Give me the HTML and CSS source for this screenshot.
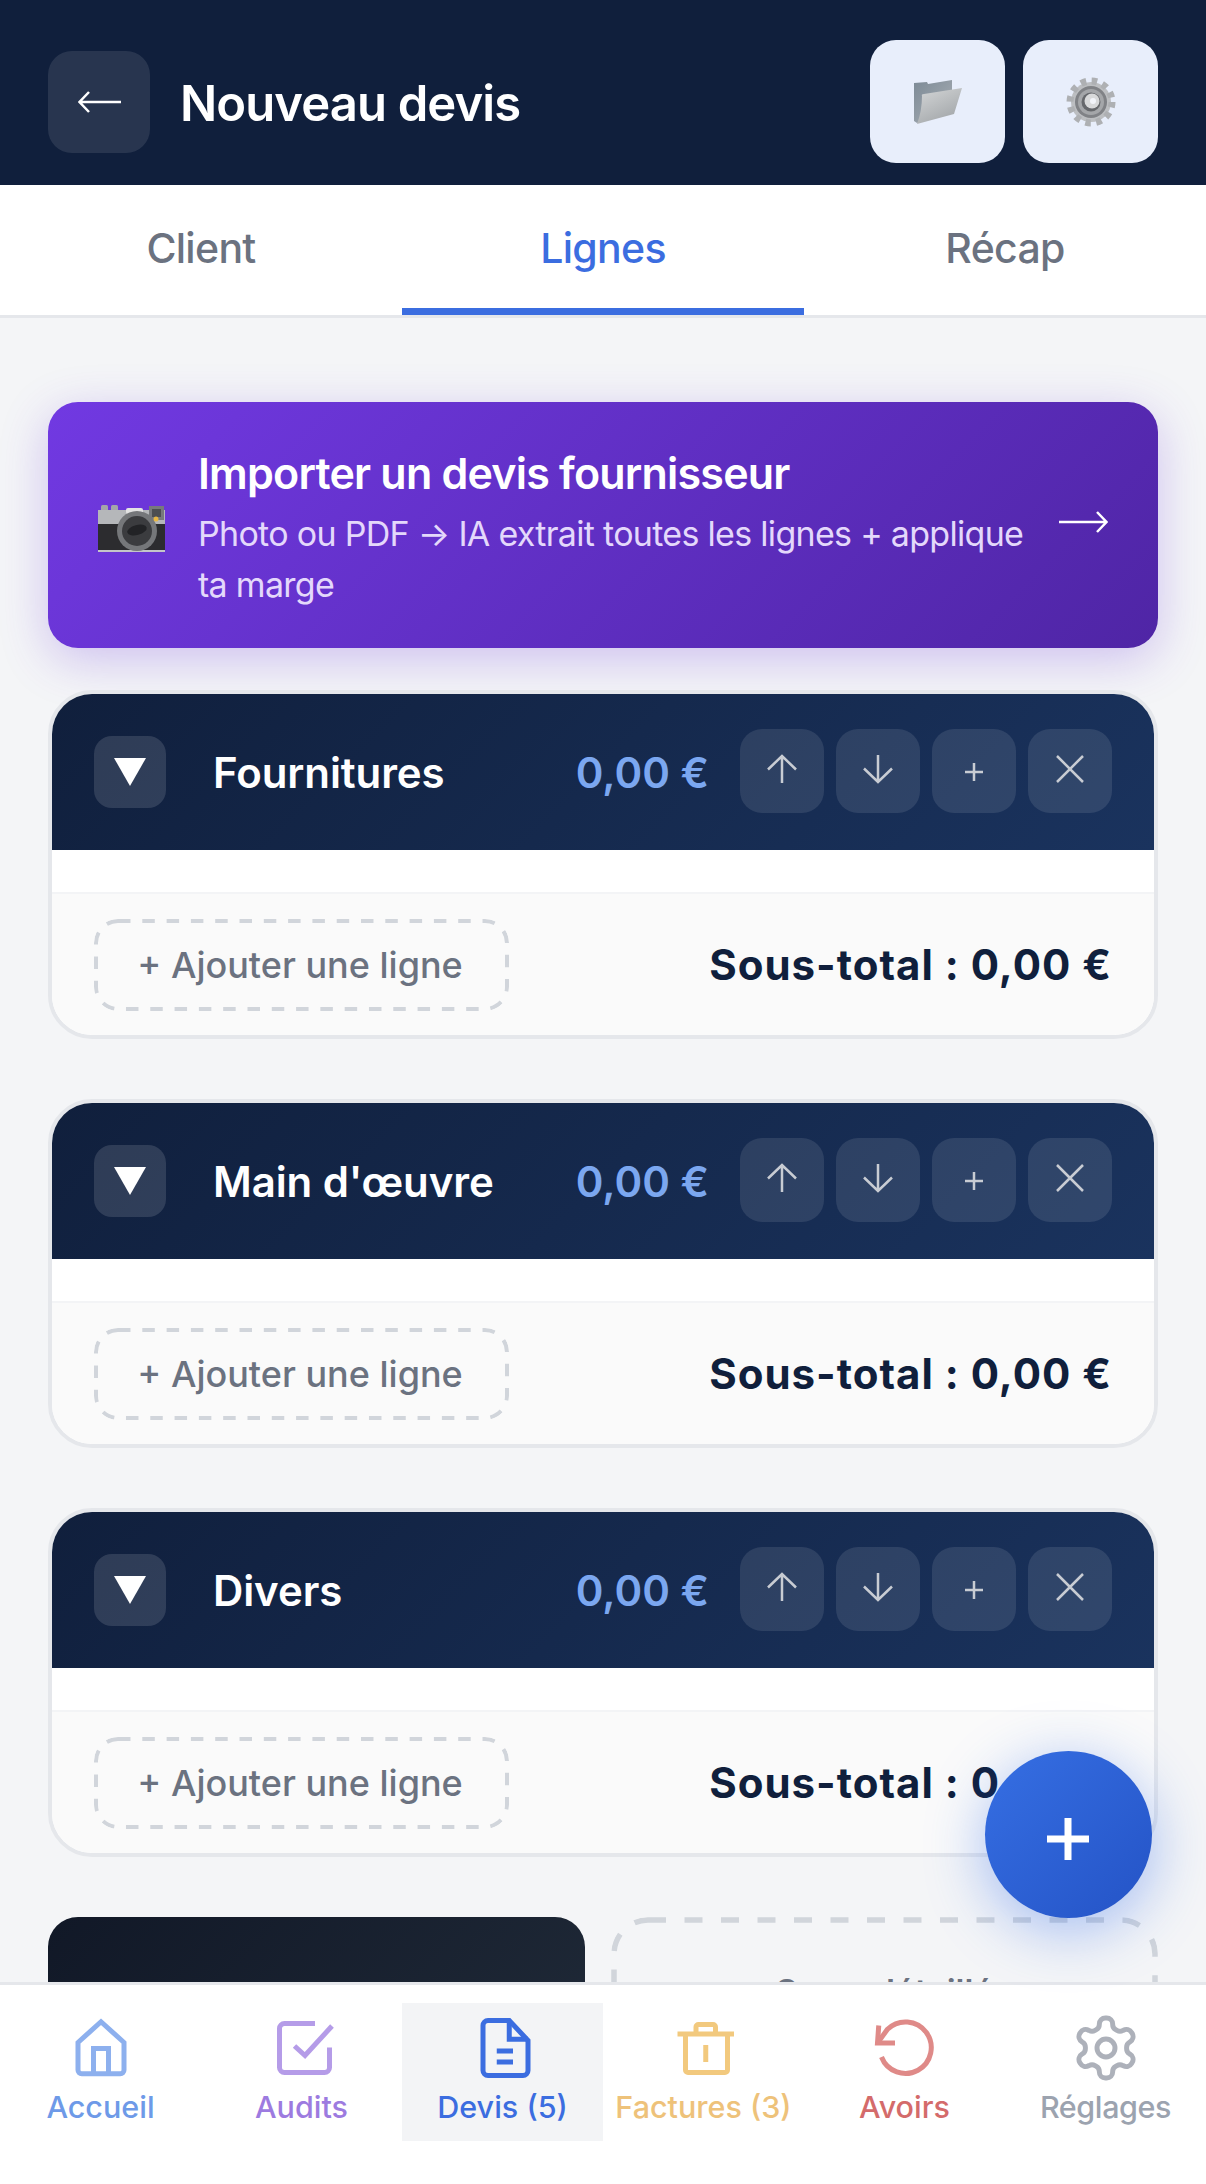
FILE: index.html
```html
<!DOCTYPE html>
<html lang="fr">
<head>
<meta charset="utf-8">
<title>Nouveau devis</title>
<link rel="stylesheet" href="styles.css">
</head>
<body>
<div class="app">
  <header class="topbar">
    <button class="back-btn">
      <svg width="43" height="22" viewBox="0 0 43 22" class="line-icon"><path d="M43 11H2M11 1 1.500 11l9.500 10"/></svg>
    </button>
    <h1 class="page-title">Nouveau devis</h1>
    <div class="top-actions">
      <button class="top-btn">
        <svg width="50" height="46" viewBox="0 0 50 46">
          <defs>
            <linearGradient id="fb" x1="0" y1="0" x2="1" y2="1"><stop offset="0" stop-color="#7d8a96"/><stop offset="1" stop-color="#aab0b6"/></linearGradient>
            <linearGradient id="ff" x1="0" y1="0" x2="0.6" y2="1"><stop offset="0" stop-color="#d5d7d8"/><stop offset="1" stop-color="#a3a7aa"/></linearGradient>
          </defs>
          <path d="M1 4 14 3l1 2 24-4v30L4 44 1 42z" fill="url(#fb)"/>
          <path d="M9 17Q8 15 11 15L49 9 41 35 4 45Q9 32 9 17z" fill="url(#ff)"/>
        </svg>
      </button>
      <button class="top-btn">
        <svg width="50" height="50" viewBox="0 0 50 50">
          <circle cx="25" cy="25" r="20" fill="#bcbec1"/>
          <circle cx="25" cy="25" r="21" fill="none" stroke="#aeb0b3" stroke-width="7" stroke-dasharray="5.500 5.500"/>
          <circle cx="25" cy="25" r="16" fill="#808286"/>
          <circle cx="25" cy="25" r="13" fill="#a4a6a9"/>
          <circle cx="25" cy="25" r="9.500" fill="#66686c"/>
          <circle cx="26" cy="24" r="7.500" fill="#d8d9da"/>
          <circle cx="27" cy="24" r="3" fill="#f2f4f9"/>
        </svg>
      </button>
    </div>
  </header>

  <nav class="tabs">
    <a class="tab">Client</a>
    <a class="tab tab-active">Lignes</a>
    <a class="tab">Récap</a>
  </nav>

  <main class="content">
    <section class="import-card">
      <svg class="camera" width="67" height="47" viewBox="0 0 67 47">
        <rect x="3" y="0" width="7" height="8" rx="1.500" fill="#a4a6a9"/>
        <rect x="13" y="0" width="7" height="8" rx="1.500" fill="#a4a6a9"/>
        <rect x="0" y="5" width="67" height="15" fill="#b5b7ba"/>
        <rect x="0" y="19" width="67" height="26" fill="#2c2c2f"/>
        <rect x="0" y="45" width="67" height="2" fill="#c4c5c8"/>
        <rect x="28" y="3" width="17" height="6" rx="2" fill="#e3e3e3"/>
        <rect x="51" y="1" width="15" height="14" fill="#77797c"/>
        <rect x="54" y="4" width="9" height="8" fill="#4c4e51"/>
        <circle cx="39" cy="26" r="20" fill="#75777a"/>
        <circle cx="39" cy="26" r="15" fill="#3b3c3f"/>
        <ellipse cx="39" cy="25" rx="10" ry="5" fill="#222326" transform="rotate(-15 39 25)"/>
        <circle cx="58" cy="14" r="2.500" fill="#e7b744"/>
      </svg>
      <div class="import-text">
        <div class="import-title">Importer un devis fournisseur</div>
        <div class="import-sub">Photo ou PDF → IA extrait toutes les lignes + applique ta marge</div>
      </div>
      <svg class="import-arrow line-icon" width="49" height="22" viewBox="0 0 49 22"><path d="M0 11H47M38 1l9.500 10L38 21"/></svg>
    </section>

    <section class="group">
      <div class="group-head">
        <button class="toggle"><svg width="32" height="28" viewBox="0 0 32 28"><path d="M0 0H32L16 28z" fill="#fff"/></svg></button>
        <h2 class="group-name">Fournitures</h2>
        <span class="group-amount">0,00 €</span>
        <div class="group-actions">
          <button class="act"><svg class="act-icon" width="32" height="30" viewBox="0 0 32 30"><path d="M16 29V2M2 15.500 16 2l14 13.500"/></svg></button>
          <button class="act"><svg class="act-icon" width="32" height="30" viewBox="0 0 32 30"><path d="M16 1v27M2 14.500 16 28l14-13.500"/></svg></button>
          <button class="act"><svg class="act-icon act-plus" width="20" height="20" viewBox="0 0 20 20"><path d="M10 1v18M1 10h18"/></svg></button>
          <button class="act"><svg class="act-icon" width="30" height="30" viewBox="0 0 30 30"><path d="m2 2 26 26M28 2 2 28"/></svg></button>
        </div>
      </div>
      <div class="group-body"></div>
      <div class="group-foot">
        <button class="add-line">+ Ajouter une ligne</button>
        <strong class="subtotal">Sous-total : 0,00 €</strong>
      </div>
    </section>

    <section class="group">
      <div class="group-head">
        <button class="toggle"><svg width="32" height="28" viewBox="0 0 32 28"><path d="M0 0H32L16 28z" fill="#fff"/></svg></button>
        <h2 class="group-name">Main d'œuvre</h2>
        <span class="group-amount">0,00 €</span>
        <div class="group-actions">
          <button class="act"><svg class="act-icon" width="32" height="30" viewBox="0 0 32 30"><path d="M16 29V2M2 15.500 16 2l14 13.500"/></svg></button>
          <button class="act"><svg class="act-icon" width="32" height="30" viewBox="0 0 32 30"><path d="M16 1v27M2 14.500 16 28l14-13.500"/></svg></button>
          <button class="act"><svg class="act-icon act-plus" width="20" height="20" viewBox="0 0 20 20"><path d="M10 1v18M1 10h18"/></svg></button>
          <button class="act"><svg class="act-icon" width="30" height="30" viewBox="0 0 30 30"><path d="m2 2 26 26M28 2 2 28"/></svg></button>
        </div>
      </div>
      <div class="group-body"></div>
      <div class="group-foot">
        <button class="add-line">+ Ajouter une ligne</button>
        <strong class="subtotal">Sous-total : 0,00 €</strong>
      </div>
    </section>

    <section class="group">
      <div class="group-head">
        <button class="toggle"><svg width="32" height="28" viewBox="0 0 32 28"><path d="M0 0H32L16 28z" fill="#fff"/></svg></button>
        <h2 class="group-name">Divers</h2>
        <span class="group-amount">0,00 €</span>
        <div class="group-actions">
          <button class="act"><svg class="act-icon" width="32" height="30" viewBox="0 0 32 30"><path d="M16 29V2M2 15.500 16 2l14 13.500"/></svg></button>
          <button class="act"><svg class="act-icon" width="32" height="30" viewBox="0 0 32 30"><path d="M16 1v27M2 14.500 16 28l14-13.500"/></svg></button>
          <button class="act"><svg class="act-icon act-plus" width="20" height="20" viewBox="0 0 20 20"><path d="M10 1v18M1 10h18"/></svg></button>
          <button class="act"><svg class="act-icon" width="30" height="30" viewBox="0 0 30 30"><path d="m2 2 26 26M28 2 2 28"/></svg></button>
        </div>
      </div>
      <div class="group-body"></div>
      <div class="group-foot">
        <button class="add-line">+ Ajouter une ligne</button>
        <strong class="subtotal">Sous-total : 0,00 €</strong>
      </div>
    </section>

    <div class="bottom-actions">
      <div class="dark-card"></div>
      <div class="dashed-card">Sous-détaillé</div>
    </div>
  </main>

  <button class="fab"><svg class="fab-plus" width="42" height="42" viewBox="0 0 42 42"><path d="M21 0v42M0 21h42" stroke="#fff" stroke-width="7" fill="none"/></svg></button>

  <nav class="bottom-nav">
    <a class="nav-item nav-home">
      <svg class="nav-icon" width="60" height="60" viewBox="0 0 24 24"><path d="M2.800 9.800 12 1.500l9.200 8.300V20.800a1.500 1.500 0 0 1-1.500 1.500H4.300a1.500 1.500 0 0 1-1.500-1.500z"/><path d="M9 22.300V12.200h6v10.100"/></svg>
      <span>Accueil</span>
    </a>
    <a class="nav-item nav-audits">
      <svg class="nav-icon" width="60" height="60" viewBox="0 0 24 24"><path d="M17.200 2.200H5a2 2 0 0 0-2 2V19.800a2 2 0 0 0 2 2H21a2 2 0 0 0 2-2V11.800"/><path d="M9 11.200l4.200 3.800L24 3.200"/></svg>
      <span>Audits</span>
    </a>
    <a class="nav-item nav-devis nav-active">
      <svg class="nav-icon" width="60" height="60" viewBox="0 0 24 24"><path d="M6 1H14.500L22 9V21a2 2 0 0 1-2 2H6a2 2 0 0 1-2-2V3a2 2 0 0 1 2-2z"/><path d="M14.500 1V8.500H22"/><path d="M9.500 13.200H16M9.500 17.600H16"/></svg>
      <span>Devis (5)</span>
    </a>
    <a class="nav-item nav-factures">
      <svg class="nav-icon" width="60" height="60" viewBox="0 0 24 24"><path d="M1.400 6.400H24"/><path d="M4.600 6.400V20.800a1 1 0 0 0 1 1H20.400a1 1 0 0 0 1-1V6.400"/><path d="M8.800 6.400V3.600a1 1 0 0 1 1-1h5.800a1 1 0 0 1 1 1V6.400"/><path d="M12.700 10.800V17.600"/></svg>
      <span>Factures (3)</span>
    </a>
    <a class="nav-item nav-avoirs">
      <svg class="nav-icon" width="60" height="60" viewBox="0 0 24 24"><path d="M2.600 15.600A10.300 10.300 0 1 0 5 4.500L1 10"/><path d="M1.500 3 1 10H8"/></svg>
      <span>Avoirs</span>
    </a>
    <a class="nav-item nav-reglages">
      <svg class="nav-icon nav-gear" width="72" height="72" viewBox="0 0 24 24"><path d="M12.220 2h-.44a2 2 0 0 0-2 2v.18a2 2 0 0 1-1 1.730l-.43.250a2 2 0 0 1-2 0l-.150-.080a2 2 0 0 0-2.730.730l-.220.380a2 2 0 0 0 .730 2.730l.150.100a2 2 0 0 1 1 1.720v.510a2 2 0 0 1-1 1.740l-.150.090a2 2 0 0 0-.730 2.730l.220.380a2 2 0 0 0 2.730.730l.150-.080a2 2 0 0 1 2 0l.430.250a2 2 0 0 1 1 1.730V20a2 2 0 0 0 2 2h.440a2 2 0 0 0 2-2v-.180a2 2 0 0 1 1-1.730l.430-.250a2 2 0 0 1 2 0l.150.080a2 2 0 0 0 2.730-.730l.220-.390a2 2 0 0 0-.730-2.730l-.150-.080a2 2 0 0 1-1-1.740v-.500a2 2 0 0 1 1-1.740l.150-.090a2 2 0 0 0 .730-2.730l-.220-.380a2 2 0 0 0-2.730-.730l-.150.080a2 2 0 0 1-2 0l-.430-.250a2 2 0 0 1-1-1.730V4a2 2 0 0 0-2-2z"/><circle cx="12" cy="12" r="3"/></svg>
      <span>Réglages</span>
    </a>
  </nav>
</div>
</body>
</html>
```

FILE: styles.css
```css
* { box-sizing: border-box; }
html, body { margin: 0; padding: 0; }
body { font-family: Inter, "Liberation Sans", sans-serif; background: #f4f5f7; }
button { font-family: inherit; border: 0; padding: 0; }
h1, h2 { margin: 0; }

.app { position: relative; width: 1206px; height: 2184px; overflow: hidden; background: #f4f5f7; }

.line-icon { fill: none; stroke: #fff; stroke-width: 2.500; }

/* top bar */
.topbar { display: flex; align-items: center; height: 185px; padding: 18px 48px 0; background: #101f3c; }
.back-btn { display: flex; align-items: center; justify-content: center; width: 102px; height: 102px; border-radius: 24px; background: rgba(255,255,255,.1); }
.page-title { flex: 1; margin: 3px 0 0 30px; font-size: 49px; font-weight: 600; letter-spacing: -.9px; color: #fff; }
.top-actions { display: flex; gap: 18px; }
.top-btn { display: flex; align-items: center; justify-content: center; width: 135px; height: 123px; border-radius: 26px; background: #e8eefb; }

/* tabs */
.tabs { display: grid; grid-template-columns: repeat(3, 1fr); height: 133px; background: #fff; border-bottom: 3px solid #e5e7eb; }
.tab { display: flex; align-items: center; justify-content: center; padding-bottom: 5px; font-size: 41px; font-weight: 500; letter-spacing: -.7px; color: #6b7280; }
.tab-active { color: #3b6de0; box-shadow: inset 0 -7px 0 #3b6de0; }

/* content */
.content { display: flex; flex-direction: column; padding: 84px 48px 0; }

.import-card { display: flex; align-items: center; height: 246px; margin-bottom: 42px; padding: 0 50px; border-radius: 30px; background: linear-gradient(135deg, #7139e2, #4f25a5); box-shadow: 0 12px 48px rgba(109,58,219,.28); }
.camera { flex: none; margin-top: 6px; }
.import-text { flex: 1; margin: 7px 0 0 33px; }
.import-title { font-size: 43px; line-height: 52px; font-weight: 600; letter-spacing: -.8px; color: #fff; }
.import-sub { margin-top: 9px; font-size: 34px; line-height: 51px; letter-spacing: -.7px; color: #e4d8fb; }
.import-arrow { flex: none; margin-left: 22px; margin-top: -6px; }

.group { height: 349px; margin-bottom: 60px; border: 4px solid #e5e7eb; border-radius: 44px; overflow: hidden; background: #fff; }
.group-head { display: flex; align-items: center; height: 156px; padding: 0 42px; background: linear-gradient(135deg, #101f3c, #1a335e); }
.toggle { display: flex; align-items: center; justify-content: center; flex: none; width: 72px; height: 72px; border-radius: 18px; background: rgba(255,255,255,.13); }
.group-name { flex: 1; margin-left: 47px; font-size: 42px; font-weight: 600; letter-spacing: -.1px; color: #fff; }
.group-amount { margin-right: 31px; font-size: 42px; font-weight: 600; color: #7ba7f0; }
.group-actions { display: flex; gap: 12px; margin-top: -2px; }
.act { display: flex; align-items: center; justify-content: center; width: 84px; height: 84px; border-radius: 22px; background: rgba(255,255,255,.1); }
.act-icon { fill: none; stroke: #c8ccd3; stroke-width: 2.500; margin-top: -4px; }
.act-plus { margin-top: 2px; }

.group-body { height: 42px; background: #fff; }
.group-foot { display: flex; align-items: center; justify-content: space-between; height: 143px; padding: 0 42px; border-top: 2px solid #f3f4f6; background: #fafafa; }
.add-line { width: 415px; height: 92px; padding-right: 3px; border-radius: 24px; background: transparent url("data:image/svg+xml,%3Csvg xmlns='http://www.w3.org/2000/svg' width='415' height='92'%3E%3Crect x='2' y='2' width='411' height='88' rx='22' fill='none' stroke='%23d1d5db' stroke-width='4' stroke-dasharray='12.500 11.800'/%3E%3C/svg%3E") no-repeat; font-size: 36px; font-weight: 500; color: #6b7280; }
.subtotal { font-size: 42px; font-weight: 700; letter-spacing: 1px; color: #101f3c; }

.bottom-actions { display: grid; grid-template-columns: 537fr 547fr; gap: 26px; height: 140px; }
.dark-card { border-radius: 30px; background: linear-gradient(135deg, #111827, #1f2937); }
.dashed-card { padding-top: 54px; border-radius: 36px; background: url("data:image/svg+xml,%3Csvg xmlns='http://www.w3.org/2000/svg' width='547' height='140'%3E%3Crect x='3' y='3' width='541' height='134' rx='34' fill='none' stroke='%23d1d5db' stroke-width='5.500' stroke-dasharray='18 18.500'/%3E%3C/svg%3E") no-repeat; text-align: center; font-size: 34px; font-weight: 600; color: #6b7280; }

/* floating button */
.fab { position: absolute; left: 985px; top: 1751px; display: flex; align-items: center; justify-content: center; width: 167px; height: 167px; border-radius: 50%; background: linear-gradient(135deg, #366fe3, #2453c6); box-shadow: 0 12px 60px rgba(37,99,235,.4); z-index: 2; }
.fab-plus { margin: 8px 2px 0 0; }

/* bottom nav */
.bottom-nav { position: absolute; left: 0; right: 0; bottom: 0; display: grid; grid-template-columns: repeat(6, 1fr); align-items: start; height: 202px; padding-top: 18px; background: #fff; border-top: 3px solid #e5e7eb; z-index: 1; }
.nav-item { display: flex; flex-direction: column; align-items: center; height: 138px; padding-top: 15px; font-size: 30.500px; font-weight: 500; line-height: 40px; }
.nav-icon { flex: none; fill: none; stroke: currentColor; stroke-width: 2; overflow: visible; margin-bottom: 9px; }
.nav-gear { margin: -6px 0 3px; stroke-width: 1.650; }
.nav-active { background: #f3f4f6; }
.nav-home { color: #6e9ae8; }
.nav-home .nav-icon { color: #8db0ee; }
.nav-audits { color: #9d7be0; }
.nav-audits .nav-icon { color: #b59ce8; }
.nav-devis { color: #3b6de0; }
.nav-factures { color: #eec27a; }
.nav-factures .nav-icon { color: #f2c97e; }
.nav-avoirs { color: #d46b6b; }
.nav-avoirs .nav-icon { color: #df8a88; }
.nav-reglages { color: #9ca3af; letter-spacing: -.4px; }
.nav-reglages .nav-icon { color: #adb1ba; }
```
